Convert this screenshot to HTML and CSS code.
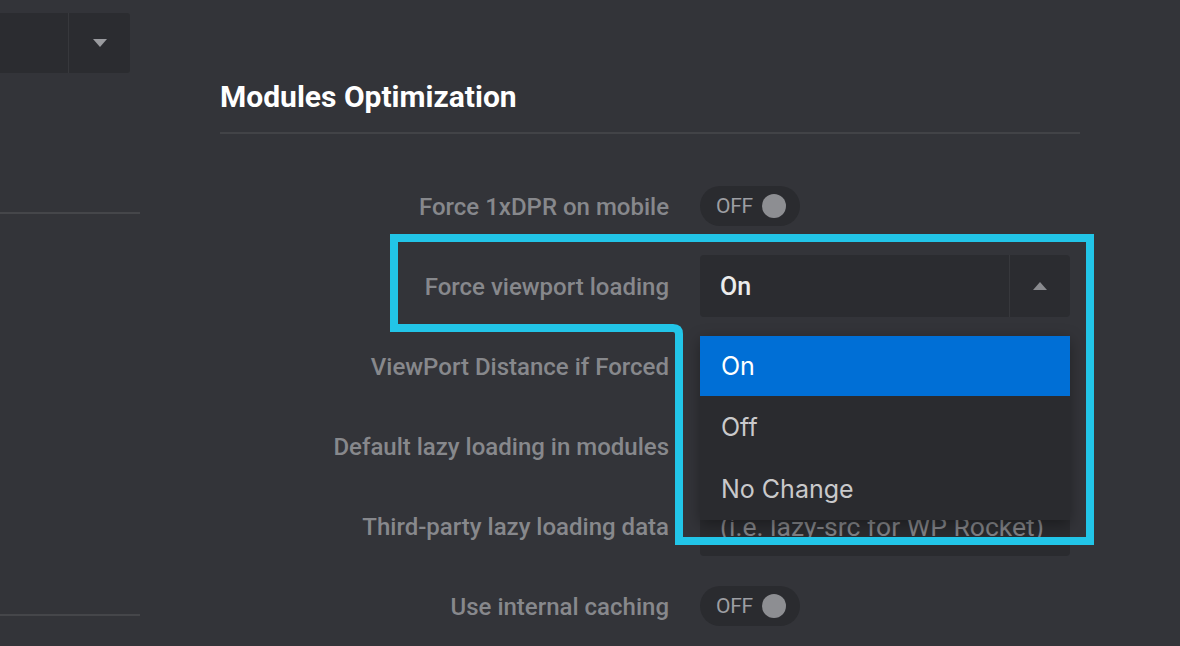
FILE: index.html
```html
<!DOCTYPE html>
<html lang="en">
<head>
<meta charset="utf-8">
<title>Modules Optimization</title>
<link rel="stylesheet" href="styles.css">
</head>
<body>
<div class="page">
  <aside class="side">
    <div class="side-select">
      <div class="side-select-val"></div>
      <div class="side-select-arrow"><span class="tri tri-down"></span></div>
    </div>
    <div class="side-sep sep1"></div>
    <div class="side-sep sep2"></div>
  </aside>

  <main class="main">
    <h2 class="title">Modules Optimization</h2>
    <div class="rows">
      <div class="row">
        <label class="label">Force 1xDPR on mobile</label>
        <div class="control">
          <div class="toggle"><span class="toggle-text">OFF</span><span class="knob"></span></div>
        </div>
      </div>
      <div class="row">
        <label class="label">Force viewport loading</label>
        <div class="control">
          <div class="select">
            <div class="select-val">On</div>
            <div class="select-arrow"><span class="tri tri-up"></span></div>
            <ul class="menu">
              <li class="menu-item active">On</li>
              <li class="menu-item">Off</li>
              <li class="menu-item">No Change</li>
            </ul>
          </div>
        </div>
      </div>
      <div class="row">
        <label class="label">ViewPort Distance if Forced</label>
        <div class="control"><div class="input"></div></div>
      </div>
      <div class="row">
        <label class="label">Default lazy loading in modules</label>
        <div class="control"><div class="input"></div></div>
      </div>
      <div class="row">
        <label class="label">Third-party lazy loading data</label>
        <div class="control"><div class="input placeholder">(i.e. lazy-src for WP Rocket)</div></div>
      </div>
      <div class="row">
        <label class="label">Use internal caching</label>
        <div class="control">
          <div class="toggle"><span class="toggle-text">OFF</span><span class="knob"></span></div>
        </div>
      </div>
    </div>
  </main>

  <svg class="highlight" width="1180" height="646" viewBox="0 0 1180 646">
    <path d="M394 238 H1090 V541 H679 V334 Q679 328 673 328 H394 Z" fill="none" stroke="#22c5e8" stroke-width="8" stroke-linejoin="miter"/>
  </svg>
</div>
</body>
</html>
```

FILE: styles.css
```css
* { box-sizing: border-box; }
html, body { margin: 0; padding: 0; }
body {
  background: #333439;
  font-family: Roboto, "Liberation Sans", sans-serif;
}
.page {
  position: relative;
  width: 1180px;
  height: 646px;
  overflow: hidden;
  display: flex;
  background: #333439;
}

/* sidebar */
.side {
  width: 140px;
  flex: none;
  padding-top: 13px;
  display: flex;
  flex-direction: column;
}
.side-select {
  width: 130px;
  height: 60px;
  display: flex;
  background: #2b2c30;
  border-radius: 0 3px 3px 0;
}
.side-select-val { flex: 1; border-right: 1px solid #37383c; }
.side-select-arrow {
  width: 61px;
  display: flex;
  align-items: center;
  justify-content: center;
}
.side-sep {
  height: 2px;
  background: #45464a;
  width: 140px;
}
.sep1 { margin-top: 139px; }
.sep2 { margin-top: 400px; }

.tri { width: 0; height: 0; display: block; }
.tri-down {
  border-left: 7px solid transparent;
  border-right: 7px solid transparent;
  border-top: 8px solid #9a9b9f;
}
.tri-up {
  border-left: 7px solid transparent;
  border-right: 7px solid transparent;
  border-bottom: 8px solid #8a8b8f;
}

/* main */
.main {
  margin-left: 80px;
  width: 860px;
  flex: none;
}
.title {
  margin: 79px 0 0;
  font-size: 30px;
  line-height: 36px;
  font-weight: 700;
  color: #ffffff;
  padding-bottom: 17px;
  border-bottom: 2px solid #424347;
}
.rows {
  margin-top: 32px;
  display: flex;
  flex-direction: column;
}
.row {
  height: 80px;
  display: grid;
  grid-template-columns: 449px 370px;
  column-gap: 31px;
  align-items: center;
}
.label {
  text-align: right;
  font-size: 24px;
  font-weight: 500;
  color: #87888c;
  white-space: nowrap;
  padding-top: 1px;
}
.control { position: relative; }

/* toggle */
.toggle {
  width: 100px;
  height: 40px;
  border-radius: 20px;
  background: #2a2b2f;
  display: flex;
  align-items: center;
  padding-left: 16px;
  gap: 9px;
}
.toggle-text {
  font-size: 21px;
  color: #9d9ea2;
  letter-spacing: -0.3px;
}
.knob {
  width: 24px;
  height: 24px;
  border-radius: 50%;
  background: #8d8e92;
}

/* select */
.select {
  position: relative;
  height: 62px;
  background: #2b2c30;
  border-radius: 4px;
  display: flex;
}
.select-val {
  flex: 1;
  display: flex;
  align-items: center;
  padding-left: 20px;
  font-size: 25px;
  font-weight: 500;
  color: #ececec;
  border-right: 1px solid #37383c;
}
.select-arrow {
  width: 60px;
  display: flex;
  align-items: center;
  justify-content: center;
}
.menu {
  position: absolute;
  top: 81px;
  left: 0;
  width: 370px;
  margin: 0;
  padding: 0;
  list-style: none;
  background: #2a2b2f;
  box-shadow: 0 4px 14px rgba(0, 0, 0, 0.35);
  z-index: 5;
}
.menu-item {
  height: 62px;
  display: flex;
  align-items: center;
  padding-left: 21px;
  font-family: Inter, "Liberation Sans", sans-serif;
  font-size: 25px;
  color: #c9c9cb;
}
.menu-item.active {
  height: 60px;
  background: #006fd6;
  color: #ffffff;
}

/* inputs */
.input {
  height: 60px;
  background: #2a2b2f;
  border-radius: 4px;
  display: flex;
  align-items: center;
  padding-left: 20px;
  font-size: 26.5px;
  color: #808185;
  white-space: nowrap;
}

/* annotation overlay */
.highlight {
  position: absolute;
  top: 0;
  left: 0;
  pointer-events: none;
  z-index: 10;
}
```
